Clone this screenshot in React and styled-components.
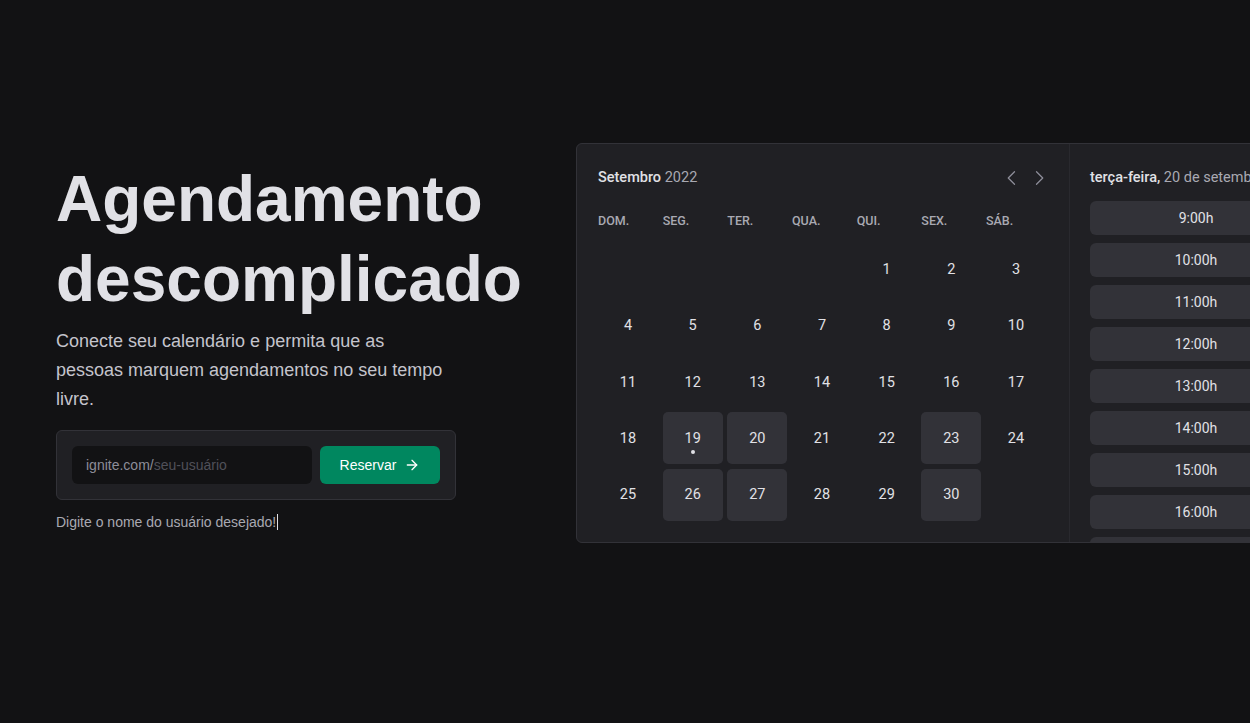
import React from 'react';
import styled, { createGlobalStyle } from 'styled-components';
import { ArrowRight } from 'lucide-react';

const GlobalStyle = createGlobalStyle`
  * { box-sizing: border-box; }
  html, body { margin: 0; padding: 0; background: #121214; overflow: hidden; }
  body { font-family: "Liberation Sans", Arial, sans-serif; color: #e1e1e6; }
`;

const WEEK_DAYS = ['DOM.', 'SEG.', 'TER.', 'QUA.', 'QUI.', 'SEX.', 'SÁB.'];
const AVAILABLE = [19, 20, 23, 26, 27, 30];
const HOURS = [9, 10, 11, 12, 13, 14, 15, 16, 17, 18];

const Styled = {
  Main: styled.main`
    display: flex;
    align-items: center;
    gap: 40px;
    height: 100vh;
    padding: 0 0 38px 56px;
    overflow: hidden;
  `,
  Hero: styled.div`
    flex-shrink: 0;
    width: 480px;
    margin-top: 6px;
  `,
  Heading: styled.h1`
    margin: 0;
    font-size: 64px;
    line-height: 80px;
    font-weight: 700;
    color: #e1e1e6;
  `,
  Lead: styled.p`
    margin: 8px 0 0;
    max-width: 400px;
    font-size: 18px;
    line-height: 29px;
    color: #c4c4cc;
  `,
  Form: styled.form`
    display: flex;
    gap: 8px;
    width: 400px;
    margin-top: 16px;
    padding: 15px;
    background: #202024;
    border: 1px solid #323238;
    border-radius: 6px;
  `,
  Field: styled.label`
    flex: 1;
    display: flex;
    align-items: center;
    min-width: 0;
    height: 38px;
    padding: 0 14px;
    background: #121214;
    border-radius: 6px;
    font-size: 14px;
  `,
  Prefix: styled.span`
    color: #8d8d99;
  `,
  Input: styled.input`
    flex: 1;
    min-width: 0;
    padding: 0;
    border: 0;
    outline: 0;
    background: transparent;
    font-family: inherit;
    font-size: 14px;
    color: #e1e1e6;
    &::placeholder { color: #505059; }
  `,
  Button: styled.button`
    flex-shrink: 0;
    display: flex;
    align-items: center;
    justify-content: center;
    gap: 8px;
    width: 120px;
    height: 38px;
    border: 0;
    border-radius: 6px;
    background: #00875f;
    color: #ffffff;
    font-family: inherit;
    font-size: 14px;
    cursor: pointer;
  `,
  Hint: styled.p`
    display: flex;
    align-items: center;
    margin: 11px 0 0;
    font-size: 14px;
    line-height: 22px;
    color: #a9a9b2;
  `,
  Caret: styled.span`
    display: inline-block;
    width: 1px;
    height: 16px;
    margin-left: 1px;
    background: #e1e1e6;
  `,
  Card: styled.div`
    flex-shrink: 0;
    display: flex;
    height: 400px;
    background: #202024;
    border: 1px solid #323238;
    border-radius: 6px;
    overflow: hidden;
    font-family: Roboto, "Liberation Sans", sans-serif;
  `,
  Calendar: styled.div`
    width: 493px;
    padding: 24px 23px 22px 21px;
    border-right: 1px solid #29292e;
  `,
  CalendarHeader: styled.div`
    display: flex;
    align-items: center;
    justify-content: space-between;
    height: 20px;
  `,
  Title: styled.span`
    font-size: 14.5px;
    font-weight: 500;
    color: #e1e1e6;
    span { font-weight: 400; color: #a9a9b2; }
  `,
  Arrows: styled.div`
    display: flex;
    gap: 7px;
    margin-right: -3px;
    color: #8d8d99;
  `,
  Grid: styled.div`
    display: grid;
    grid-template-columns: repeat(7, 1fr);
    column-gap: 4.67px;
    row-gap: 4.33px;
    margin-top: ${(p) => p.$top}px;
  `,
  WeekDay: styled.span`
    font-size: 12.5px;
    line-height: 16px;
    font-weight: 500;
    color: #a9a9b2;
  `,
  Day: styled.div`
    position: relative;
    display: flex;
    align-items: center;
    justify-content: center;
    height: 52px;
    border-radius: 5px;
    background: ${(p) => (p.$available ? '#323238' : 'transparent')};
    font-size: 14.5px;
    color: #e1e1e6;
  `,
  Dot: styled.span`
    position: absolute;
    bottom: 10px;
    left: 50%;
    width: 4px;
    height: 4px;
    margin-left: -2px;
    border-radius: 50%;
    background: #e1e1e6;
  `,
  Times: styled.div`
    width: 252px;
    padding: 24px 20px 0;
  `,
  TimesTitle: styled.div`
    height: 20px;
    line-height: 20px;
    white-space: nowrap;
    font-size: 14.5px;
    font-weight: 500;
    color: #e1e1e6;
    span { font-weight: 400; color: #a9a9b2; }
  `,
  TimeList: styled.div`
    display: flex;
    flex-direction: column;
    gap: 8px;
    margin-top: 13px;
  `,
  Time: styled.div`
    display: flex;
    align-items: center;
    justify-content: center;
    flex-shrink: 0;
    height: 34px;
    border-radius: 6px;
    background: #323238;
    font-size: 14px;
    color: #e1e1e6;
  `,
};

const Caret = ({ dir }) => (
  <svg width="20" height="20" viewBox="0 0 256 256" fill="none">
    <polyline
      points={dir === 'left' ? '160,208 80,128 160,48' : '96,48 176,128 96,208'}
      stroke="currentColor"
      strokeWidth="16"
      strokeLinecap="round"
      strokeLinejoin="round"
    />
  </svg>
);

const days = [
  ...Array.from({ length: 4 }, () => null),
  ...Array.from({ length: 30 }, (_, i) => i + 1),
];

const App = () => (
  <>
    <GlobalStyle />
    <Styled.Main>
      <Styled.Hero>
        <Styled.Heading>Agendamento descomplicado</Styled.Heading>
        <Styled.Lead>
          Conecte seu calendário e permita que as pessoas marquem agendamentos no seu tempo livre.
        </Styled.Lead>
        <Styled.Form onSubmit={(e) => e.preventDefault()}>
          <Styled.Field>
            <Styled.Prefix>ignite.com/</Styled.Prefix>
            <Styled.Input placeholder="seu-usuário" />
          </Styled.Field>
          <Styled.Button type="submit">
            Reservar
            <ArrowRight size={16} strokeWidth={2} />
          </Styled.Button>
        </Styled.Form>
        <Styled.Hint>
          Digite o nome do usuário desejado!
          <Styled.Caret />
        </Styled.Hint>
      </Styled.Hero>

      <Styled.Card>
        <Styled.Calendar>
          <Styled.CalendarHeader>
            <Styled.Title>
              Setembro <span>2022</span>
            </Styled.Title>
            <Styled.Arrows>
              <Caret dir="left" />
              <Caret dir="right" />
            </Styled.Arrows>
          </Styled.CalendarHeader>
          <Styled.Grid $top={25}>
            {WEEK_DAYS.map((d) => (
              <Styled.WeekDay key={d}>{d}</Styled.WeekDay>
            ))}
          </Styled.Grid>
          <Styled.Grid $top={15}>
            {days.map((d, i) => (
              <Styled.Day key={i} $available={AVAILABLE.includes(d)}>
                {d}
                {d === 19 && <Styled.Dot />}
              </Styled.Day>
            ))}
          </Styled.Grid>
        </Styled.Calendar>
        <Styled.Times>
          <Styled.TimesTitle>
            terça-feira, <span>20 de setembro</span>
          </Styled.TimesTitle>
          <Styled.TimeList>
            {HOURS.map((h) => (
              <Styled.Time key={h}>{h}:00h</Styled.Time>
            ))}
          </Styled.TimeList>
        </Styled.Times>
      </Styled.Card>
    </Styled.Main>
  </>
);

export default App;
